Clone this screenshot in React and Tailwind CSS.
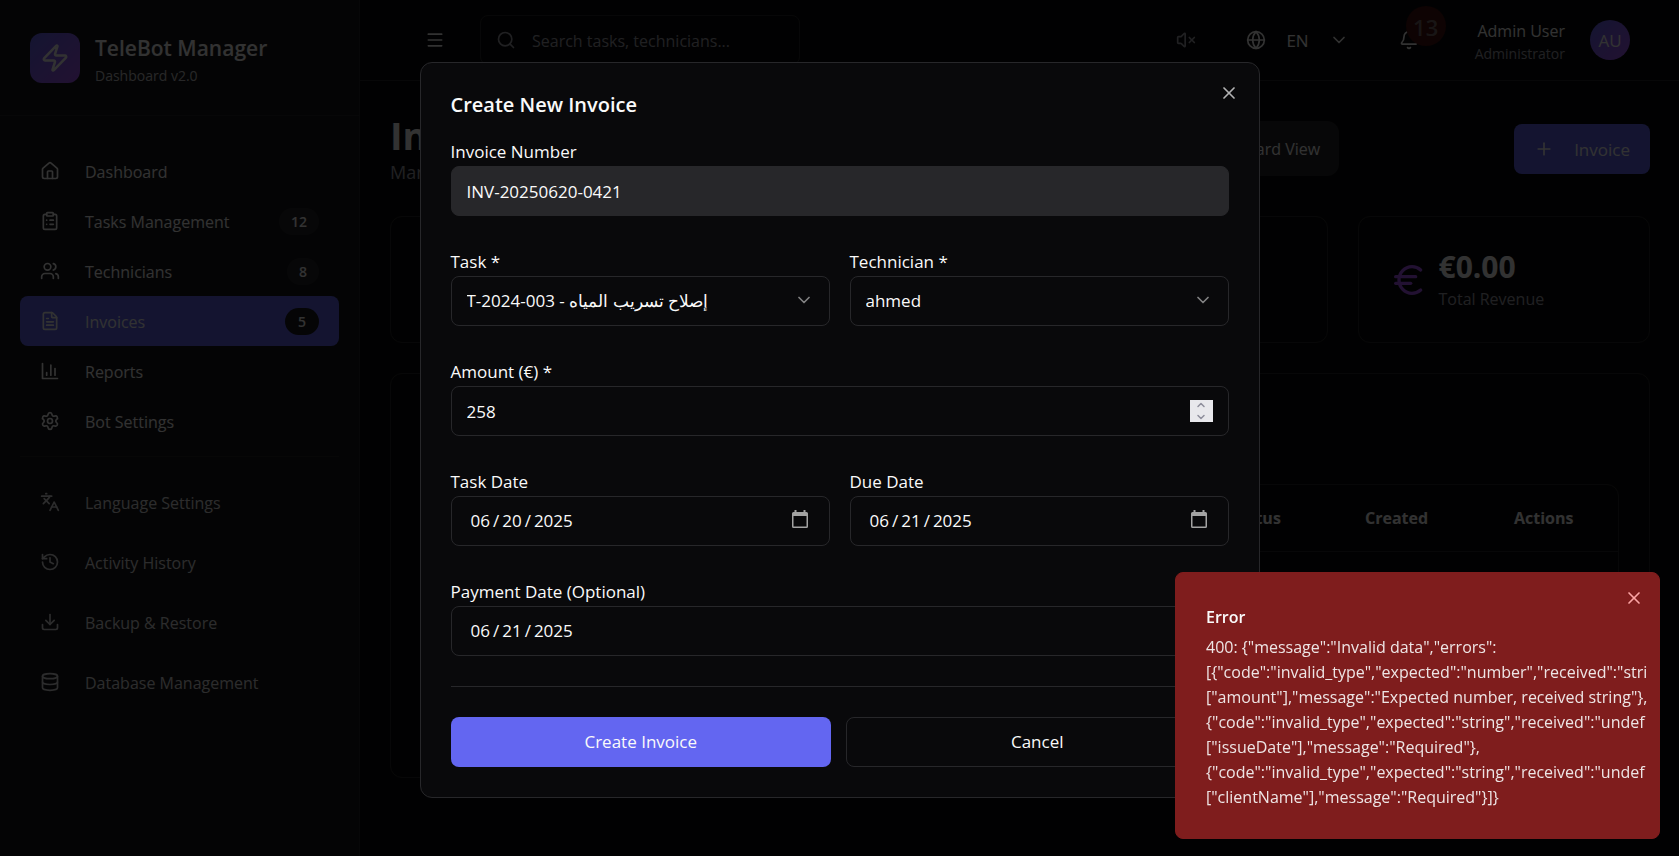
import {
  Bell,
  ChevronDown,
  ChevronUp,
  ClipboardList,
  Database,
  Download,
  Euro,
  FileText,
  Globe,
  History,
  House,
  Languages,
  Menu,
  Plus,
  Search,
  Settings,
  Users,
  VolumeX,
  X,
  Zap,
} from "lucide-react";

function BarsIcon({ className }) {
  return (
    <svg
      className={className}
      viewBox="0 0 24 24"
      fill="none"
      stroke="currentColor"
      strokeWidth="2"
      strokeLinecap="round"
      strokeLinejoin="round"
      aria-hidden="true"
    >
      <path d="M3 3v18h18" />
      <path d="M18 17V9" />
      <path d="M13 17V5" />
      <path d="M8 17v-3" />
    </svg>
  );
}

function CalendarIcon({ className }) {
  return (
    <svg className={className} viewBox="0 0 18 18" fill="currentColor" aria-hidden="true">
      <path
        fillRule="evenodd"
        d="M3.500 0h2v2h7V0h2v2h1A1.500 1.500 0 0 1 17 3.500V16.500A1.500 1.500 0 0 1 15.500 18H2.500A1.500 1.500 0 0 1 1 16.500V3.500A1.500 1.500 0 0 1 2.500 2H3.500zM2.500 6v10.500h13V6z"
      />
    </svg>
  );
}

const mainNav = [
  { label: "Dashboard", icon: House },
  { label: "Tasks Management", icon: ClipboardList, count: 12 },
  { label: "Technicians", icon: Users, count: 8 },
  { label: "Invoices", icon: FileText, count: 5, active: true },
  { label: "Reports", icon: BarsIcon },
  { label: "Bot Settings", icon: Settings },
];

const toolNav = [
  { label: "Language Settings", icon: Languages },
  { label: "Activity History", icon: History },
  { label: "Backup & Restore", icon: Download },
  { label: "Database Management", icon: Database },
];

function NavItem({ item }) {
  const Icon = item.icon;
  return (
    <a
      href="#"
      className={
        item.active
          ? "flex h-12.5 items-center gap-[25px] rounded-lg bg-[#6366f1] px-5"
          : "flex h-12.5 items-center gap-[25px] rounded-lg px-5"
      }
    >
      <Icon className="size-5 shrink-0" />
      <span className="flex-1 pt-0.5">{item.label}</span>
      {item.count && (
        <span
          className={
            item.active
              ? "rounded-full bg-[#1c1c1f] px-3.25 text-sm leading-[27px] font-semibold"
              : "rounded-full bg-[#27272a] px-3 text-sm leading-[27px] font-semibold"
          }
        >
          {item.count}
        </span>
      )}
    </a>
  );
}

function Sidebar() {
  return (
    <aside className="w-[360px] shrink-0 border-r border-[#27272a] bg-[#18181b]">
      <div className="flex items-center gap-[15px] border-b border-[#27272a] p-7.5">
        <div className="flex size-12.5 items-center justify-center rounded-xl bg-linear-to-br from-[#6366f1] to-[#a855f7]">
          <Zap className="size-7.5" />
        </div>
        <div>
          <p className="text-[21px] leading-[37px] font-semibold">TeleBot Manager</p>
          <p className="text-sm leading-[18px] text-[#c4c4c8]">Dashboard v2.0</p>
        </div>
      </div>
      <nav className="px-5 pt-7.5">
        {mainNav.map((item) => (
          <NavItem key={item.label} item={item} />
        ))}
        <div className="mt-2.5 flex flex-col gap-2.5 border-t border-[#232326] pt-5 text-[#dcdcde]">
          {toolNav.map((item) => (
            <NavItem key={item.label} item={item} />
          ))}
        </div>
      </nav>
    </aside>
  );
}

function TopBar() {
  return (
    <header className="flex h-[81px] items-center border-b border-[#27272a] pr-[49px] pl-[65px]">
      <button type="button" aria-label="Toggle sidebar" className="mr-[35px]">
        <Menu className="size-5" />
      </button>
      <div className="flex h-12.5 w-80 items-center gap-4 rounded-lg border border-[#27272a] px-3.75">
        <Search className="size-5 shrink-0 text-[#a1a1aa]" />
        <input
          type="search"
          aria-label="Search"
          placeholder="Search tasks, technicians..."
          className="w-full min-w-0 bg-transparent pt-0.5 outline-none placeholder:text-[#a1a1aa]"
        />
      </div>
      <div className="ml-auto flex items-center">
        <button type="button" aria-label="Sound off" className="mr-12.5 text-[#a1a1aa]">
          <VolumeX className="size-5" />
        </button>
        <button type="button" className="mr-12.5 flex items-center">
          <Globe className="mr-5 size-5" />
          <span className="mr-5 pt-0.5 text-[17px]">EN</span>
          <ChevronDown className="size-5" />
        </button>
        <button type="button" aria-label="Notifications" className="relative mr-[56px]">
          <Bell className="size-5" />
          <span className="absolute -top-6 left-[7px] flex size-10 items-center justify-center rounded-full bg-[#45100f] pt-0.5 text-[22px] font-semibold text-[#7a6c6c]">
            13
          </span>
        </button>
        <div className="mr-[25px] pt-0.5 text-right">
          <p className="leading-[25px]">Admin User</p>
          <p className="text-sm leading-5 text-[#a1a1aa]">Administrator</p>
        </div>
        <div className="flex size-10 items-center justify-center rounded-full bg-linear-to-br from-[#6366f1] to-[#a855f7] pt-0.5 text-[17px]">
          AU
        </div>
      </div>
    </header>
  );
}

const columns = ["Invoice", "Task", "Technician", "Amount"];

function InvoicesPage() {
  return (
    <main className="flex flex-col gap-7.5 py-7.5 pr-[29px] pl-7.5">
      <div className="flex items-center">
        <div>
          <h1 className="text-[38px] leading-[48px] font-bold">Invoices</h1>
          <p className="text-lg leading-[27px] text-[#a1a1aa]">Manage invoices</p>
        </div>
        <div className="mr-[175px] ml-auto flex rounded-xl bg-[#27272a] p-1">
          <button type="button" className="h-[47px] px-3.75">Table View</button>
          <button type="button" className="h-[47px] px-3.75">Card View</button>
        </div>
        <button
          type="button"
          className="flex h-12.5 items-center gap-5 rounded-lg bg-[#6366f1] px-5"
        >
          <Plus className="size-5" />
          <span className="pt-0.5 text-[17px]">Invoice</span>
        </button>
      </div>
      <div className="grid grid-cols-4 gap-7.5">
        <div className="rounded-xl border border-[#27272a]" />
        <div className="rounded-xl border border-[#27272a]" />
        <div className="rounded-xl border border-[#27272a]" />
        <div className="flex items-center gap-2.5 rounded-xl border border-[#27272a] p-7.5">
          <Euro className="size-10 text-[#a855f7]" />
          <div>
            <p className="text-3xl leading-10 font-bold">€0.00</p>
            <p className="leading-[25px] text-[#a1a1aa]">Total Revenue</p>
          </div>
        </div>
      </div>
      <div className="rounded-xl border border-[#27272a] px-7.5 pt-[110px] pb-7.5">
        <div className="h-[263px] rounded-xl border border-[#27272a]">
          <table className="w-full text-left">
            <thead>
              <tr className="h-[66px] border-b border-[#27272a] font-bold">
                {columns.map((name) => (
                  <th key={name} className="px-5">{name}</th>
                ))}
                <th className="w-[135px] px-5">Status</th>
                <th className="w-[149px] px-5">Created</th>
                <th className="w-[124px] px-5">Actions</th>
              </tr>
            </thead>
          </table>
        </div>
      </div>
    </main>
  );
}

function Field({ id, label, children }) {
  return (
    <div className="min-w-0">
      <label htmlFor={id} className="block h-7.5 leading-8">{label}</label>
      {children}
    </div>
  );
}

function SelectField({ id, label, value }) {
  return (
    <Field id={id} label={label}>
      <div className="relative">
        <select
          id={id}
          defaultValue={value}
          className="h-12.5 w-full appearance-none rounded-lg border border-[#27272a] bg-transparent px-3.75 outline-none"
        >
          <option value={value}>{value}</option>
        </select>
        <ChevronDown className="pointer-events-none absolute top-3.5 right-4 size-5 opacity-50" />
      </div>
    </Field>
  );
}

function DateField({ id, label, value }) {
  return (
    <Field id={id} label={label}>
      <div className="relative">
        <input
          id={id}
          type="date"
          defaultValue={value}
          className="h-12.5 w-full rounded-lg border border-[#27272a] bg-transparent px-4.5 outline-none [&::-webkit-calendar-picker-indicator]:opacity-0 [&::-webkit-datetime-edit-text]:px-0.5"
        />
        <CalendarIcon className="pointer-events-none absolute top-3.5 right-[21px] size-4.5 text-[#a3a3a3]" />
      </div>
    </Field>
  );
}

function InvoiceDialog() {
  return (
    <div
      role="dialog"
      aria-labelledby="dialog-title"
      className="relative w-full max-w-[840px] rounded-xl border border-[#27272a] bg-[#09090b] p-7.5 text-[17px] text-[#fafafa]"
    >
      <button
        type="button"
        aria-label="Close"
        className="absolute top-5 right-5 opacity-70"
      >
        <X className="size-5" />
      </button>
      <h2 id="dialog-title" className="mb-5 text-xl leading-[23px] font-semibold">
        Create New Invoice
      </h2>
      <form className="flex flex-col gap-7.5">
        <Field id="number" label="Invoice Number">
          <input
            id="number"
            type="text"
            readOnly
            value="INV-20250620-0421"
            className="h-12.5 w-full rounded-lg border border-[#27272a] bg-[#27272a] px-3.75 outline-none"
          />
        </Field>
        <div className="grid grid-cols-2 gap-5">
          <SelectField id="task" label="Task *" value="T-2024-003 - إصلاح تسريب المياه" />
          <SelectField id="technician" label="Technician *" value="ahmed" />
        </div>
        <Field id="amount" label="Amount (€) *">
          <div className="relative">
            <input
              id="amount"
              type="number"
              defaultValue="258"
              className="h-12.5 w-full appearance-none rounded-lg border border-[#27272a] bg-transparent px-3.75 outline-none [appearance:textfield]"
            />
            <div className="absolute top-3.5 right-4 flex h-5.5 w-[23px] flex-col items-center justify-center bg-[#e8e8ec] text-[#8e8e9c]">
              <button type="button" aria-label="Increase">
                <ChevronUp className="size-3" strokeWidth={3} />
              </button>
              <button type="button" aria-label="Decrease">
                <ChevronDown className="size-3" strokeWidth={3} />
              </button>
            </div>
          </div>
        </Field>
        <div className="grid grid-cols-2 gap-5">
          <DateField id="task-date" label="Task Date" value="2025-06-20" />
          <DateField id="due-date" label="Due Date" value="2025-06-21" />
        </div>
        <DateField id="payment-date" label="Payment Date (Optional)" value="2025-06-21" />
        <div className="flex gap-3.75 border-t border-[#27272a] pt-7.5">
          <button type="submit" className="h-12.5 flex-1 rounded-lg bg-[#6366f1]">
            Create Invoice
          </button>
          <button type="button" className="h-12.5 flex-1 rounded-lg border border-[#27272a]">
            Cancel
          </button>
        </div>
      </form>
    </div>
  );
}

const errorLines = [
  '400: {"message":"Invalid data","errors":',
  '[{"code":"invalid_type","expected":"number","received":"stri',
  '["amount"],"message":"Expected number, received string"},',
  '{"code":"invalid_type","expected":"string","received":"undef',
  '["issueDate"],"message":"Required"},',
  '{"code":"invalid_type","expected":"string","received":"undef',
  '["clientName"],"message":"Required"}]}',
];

function ErrorToast() {
  return (
    <div
      role="alert"
      className="fixed right-[19px] bottom-[17px] w-[485px] overflow-hidden rounded-lg border border-[#7f1d1d] bg-[#7f1d1d] pt-8 pb-7 pl-7.5 text-[#fafafa]"
    >
      <button
        type="button"
        aria-label="Dismiss"
        className="absolute top-3.75 right-3.75 text-[#fca5a5]"
      >
        <X className="size-5" />
      </button>
      <p className="mb-[5px] leading-[25px] font-semibold">Error</p>
      <div className="leading-[25px] whitespace-nowrap opacity-90">
        {errorLines.map((line, i) => (
          <p key={i}>{line}</p>
        ))}
      </div>
    </div>
  );
}

export default function App() {
  return (
    <div className="min-h-screen bg-[#09090b] font-['Open_Sans','Noto_Sans',sans-serif] text-base text-[#fafafa]">
      <div className="flex min-h-screen">
        <Sidebar />
        <div className="min-w-0 flex-1">
          <TopBar />
          <InvoicesPage />
        </div>
      </div>
      <div className="fixed inset-0 flex items-center justify-center bg-black/80 pt-1">
        <InvoiceDialog />
      </div>
      <ErrorToast />
    </div>
  );
}
